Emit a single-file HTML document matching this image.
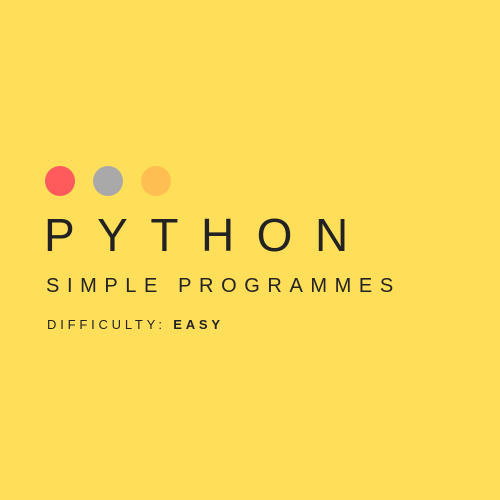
<!DOCTYPE html>
<html><head><style>
html,body{margin:0;padding:0}
body{width:500px;height:500px;background:#FFDE59;position:relative;overflow:hidden;font-family:"Liberation Sans",sans-serif;color:#222}
.c{position:absolute;top:166px;width:30px;height:30px;border-radius:50%}
.t{position:absolute;left:44px;white-space:nowrap;line-height:1}
</style></head><body>
<div class="c" style="left:45px;background:#FF5A5C"></div>
<div class="c" style="left:93px;background:#A9A9A9"></div>
<div class="c" style="left:141px;background:#FFBE51"></div>
<div class="t" style="top:212px;font-size:46px;letter-spacing:22.5px">PYTHON</div>
<div class="t" style="top:276px;font-size:20px;letter-spacing:7.6px;left:46px">SIMPLE PROGRAMMES</div>
<div class="t" style="top:318px;font-size:13px;letter-spacing:3.8px;left:47px">DIFFICULTY: <b>EASY</b></div>
</body></html>
